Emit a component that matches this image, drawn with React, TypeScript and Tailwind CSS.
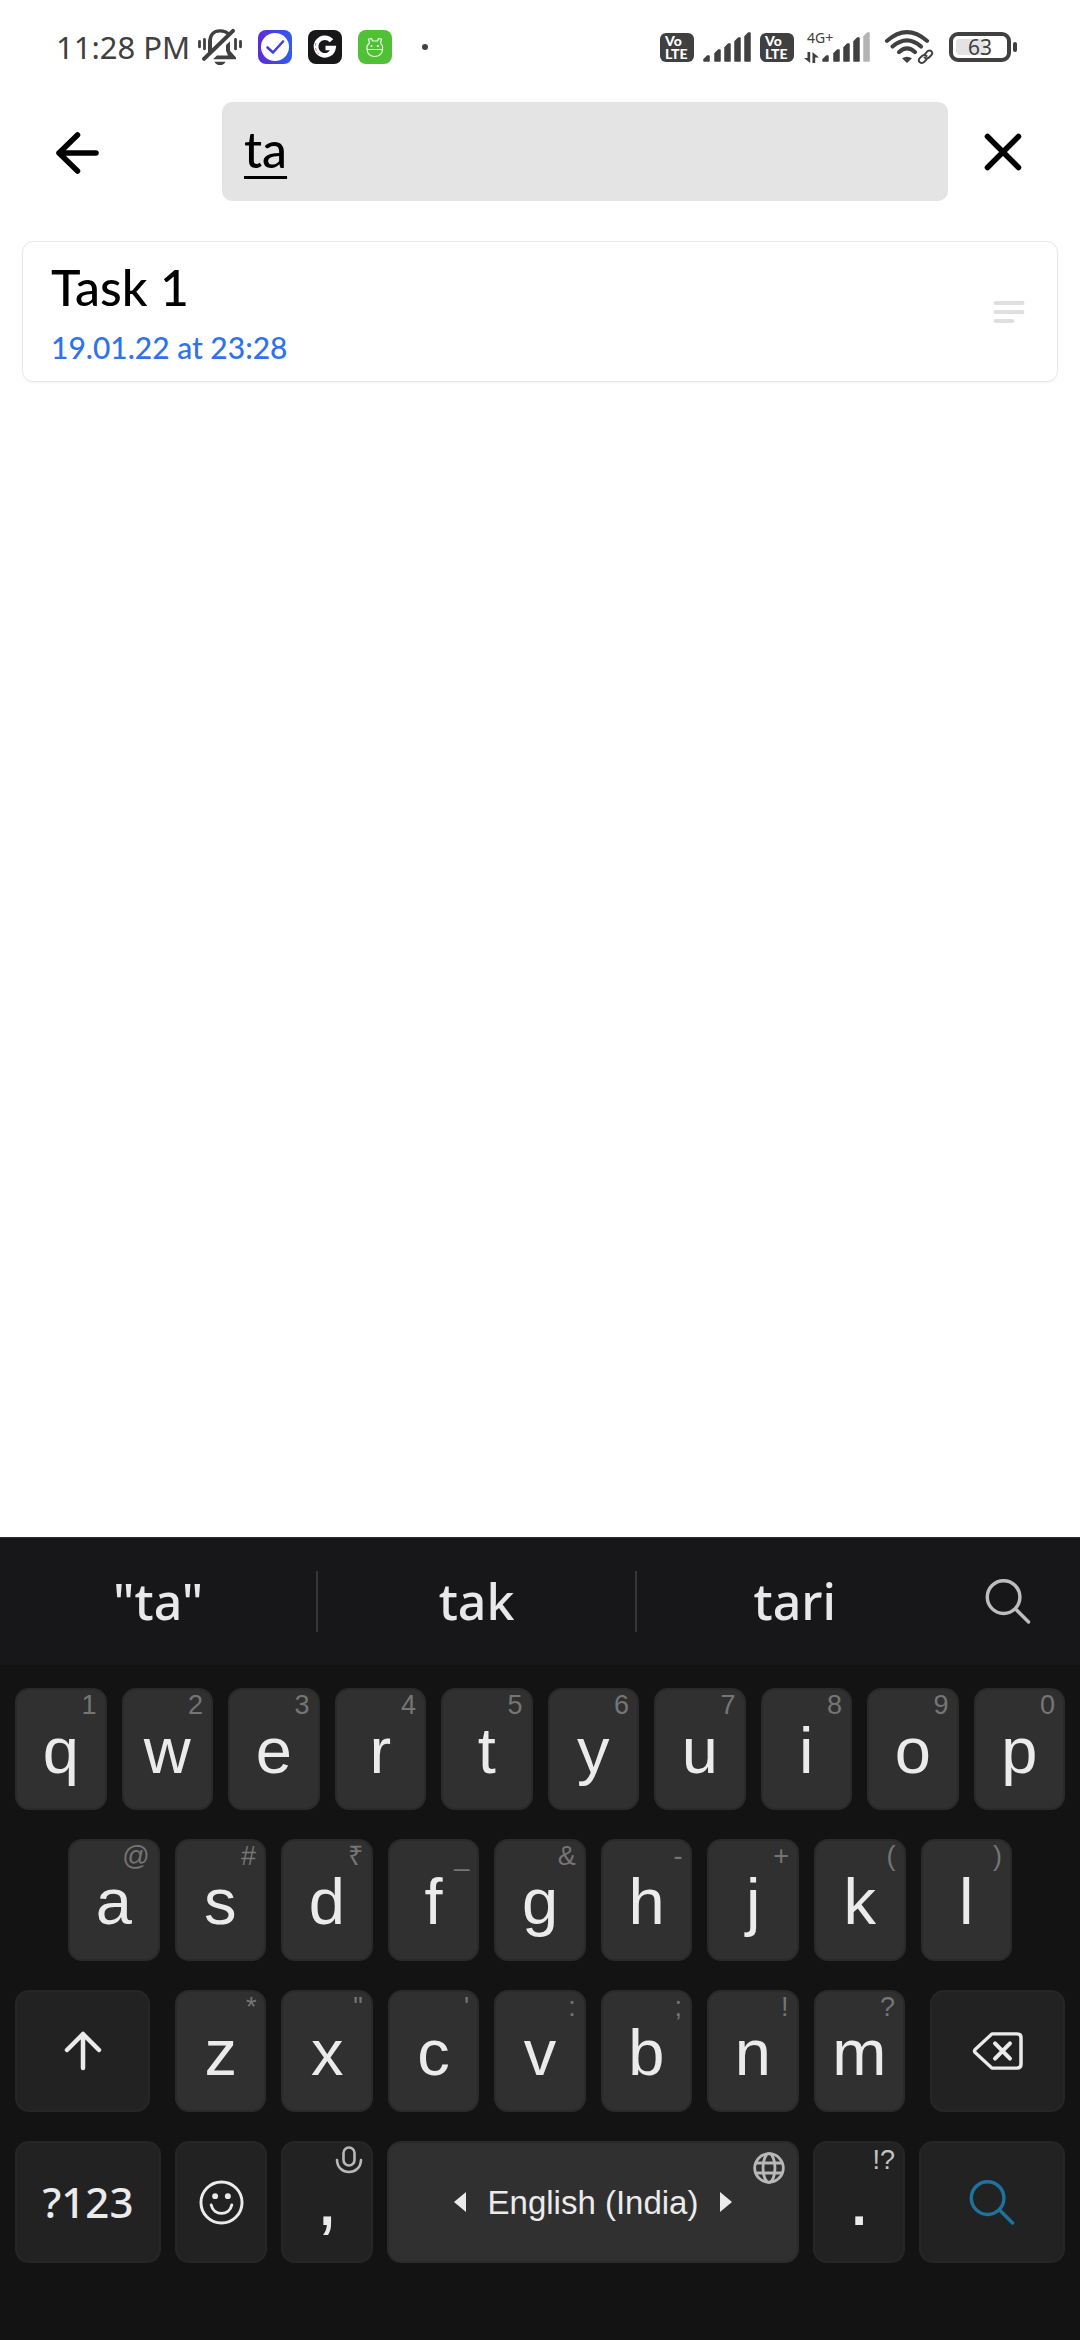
import { useState } from "react";
import type { ReactNode } from "react";

const ink = "#404040";

function MutedBell() {
  return (
    <svg width="44" height="38" viewBox="0 0 44 40" preserveAspectRatio="none" fill="none" stroke={ink} strokeLinecap="round" aria-label="Ringer muted">
      <path d="M12 24V14C12 7 16 3 22 3C26 3 29 4.500 30.500 6.500" strokeWidth="3.500" />
      <path d="M12 14V26" strokeWidth="4" />
      <path d="M6 32.500L35 3" strokeWidth="4" />
      <path d="M32 14V24L38 31V33H15L19 29H30L28 24V18Z" fill={ink} stroke="none" />
      <path d="M16.500 35.500H27.500C26.500 38 24.500 39 22 39C19.500 39 17.500 38 16.500 35.500Z" fill={ink} stroke="none" />
      <path d="M1.500 14V20M6.500 12V22M37.500 12V22M42.500 14V20" strokeWidth="2.800" />
    </svg>
  );
}

function CheckApp() {
  return (
    <svg width="34" height="34" viewBox="0 0 34 34" fill="none" aria-label="Tasks app">
      <defs>
        <linearGradient id="check-bg" x1="0" y1="0" x2="1" y2="0">
          <stop offset="0" stopColor="#5b2bd6" />
          <stop offset="1" stopColor="#2f5df0" />
        </linearGradient>
      </defs>
      <rect width="34" height="34" rx="8" fill="url(#check-bg)" />
      <circle cx="17" cy="17" r="14" fill="#fff" />
      <path d="M9.500 17.500L15 22.500L25 11.500" stroke="#4340d4" strokeWidth="2.600" strokeLinecap="round" strokeLinejoin="round" />
    </svg>
  );
}

function GApp() {
  return (
    <svg width="34" height="34" viewBox="0 0 34 34" fill="none" aria-label="G app">
      <rect width="34" height="34" rx="8" fill="#17171a" />
      <path d="M23.500 10.800A8.800 8.800 0 1 0 25.500 18H17.500" stroke="#fff" strokeWidth="4.600" />
      <path d="M8 13A10 10 0 0 0 11 24" stroke="#e0567c" strokeWidth="0.900" strokeDasharray="3 2" />
    </svg>
  );
}

function PetApp() {
  return (
    <svg width="34" height="34" viewBox="0 0 34 34" fill="none" stroke="#e9fbe0" strokeWidth="1.200" strokeLinejoin="round" aria-label="Pet app">
      <rect width="34" height="34" rx="8" fill="#50c036" stroke="none" />
      <path d="M9 19.500V16L11.500 13L10.500 9L13.500 8.500L14.500 11H19.500L20.500 8.500L23.500 9L22.500 13L24.500 16V19.500Z" />
      <path d="M9 19.500C9.500 24 12.500 26.500 16.700 26.500C21 26.500 24 24 24.500 19.500" />
      <path d="M12.500 16H14.500M18.800 16H21M13.500 15V17M19.900 15V17" />
    </svg>
  );
}

function VoLte() {
  return (
    <span className="flex h-[29px] w-[34px] flex-col justify-center rounded-md bg-[#404040] pl-[5px] font-['Lato'] text-[14px] leading-[13px] font-black text-white">
      <span>Vo</span>
      <span>LTE</span>
    </span>
  );
}

function Signal({ weak = false }: { weak?: boolean }) {
  const bars = [
    [0, 23],
    [11, 17],
    [21, 11],
    [31, 5],
    [41, 0],
  ];
  return (
    <svg width="48" height="30" viewBox="0 0 48 30" strokeLinejoin="round" strokeWidth="1.500" aria-label="Signal strength">
      {bars.map(([x, y], i) => (
        <path
          key={x}
          d={`M${x + 1} ${y + 4.5}L${x + 4.5} ${y + 1}H${x + 6}V29H${x + 1}Z`}
          fill={weak && i === 4 ? "#b4b4b4" : ink}
          stroke={weak && i === 4 ? "#b4b4b4" : ink}
        />
      ))}
    </svg>
  );
}

function Wifi() {
  return (
    <svg width="50" height="36" viewBox="0 0 50 38" preserveAspectRatio="none" fill="none" stroke={ink} strokeWidth="4.200" strokeLinecap="round" aria-label="Wi-Fi">
      <path d="M3 12.500Q23 -6 43 12.500" />
      <path d="M8.500 18.500Q23 5.500 37 18.500" />
      <path d="M15 24.500Q23 16.500 31 24.500" />
      <path d="M18 31Q23 27.500 28 31L23 36Z" fill={ink} stroke="none" />
      <circle cx="42" cy="30" r="9" fill="#fff" stroke="none" />
      <g strokeWidth="2">
        <path d="M41 26.500L43 24C46 20.500 50.500 25 47 28L44.500 30.500C43 31.500 41.500 31 40.500 30" />
        <path d="M42.500 32L40.500 34.500C37.500 38 32.500 34 36 30.500L38.500 28C40 27 41.500 27.500 42.500 28.500" />
      </g>
    </svg>
  );
}

function Battery() {
  return (
    <span className="flex items-center gap-0.5">
      <span className="relative flex h-[30px] w-[62px] items-center justify-center rounded-[9px] border-4 border-[#404040]">
        <span className="absolute top-[3px] bottom-[3px] left-[3px] w-[30px] rounded-sm bg-[#e3e3e3]" />
        <span className="relative font-['Noto_Sans'] text-[21px] leading-none text-[#404040]">63</span>
      </span>
      <span className="h-2.5 w-1 rounded-sm bg-[#404040]" />
    </span>
  );
}

function StatusBar() {
  return (
    <header className="flex h-[94px] items-center justify-between pr-[63px] pl-[56px]">
      <div className="flex items-center">
        <span className="mr-2 font-['Noto_Sans'] text-[31px] leading-none text-[#404040]">11:28 PM</span>
        <div className="flex items-center gap-4">
          <MutedBell />
          <CheckApp />
          <GApp />
          <PetApp />
        </div>
        <span className="ml-[30px] size-1.5 rounded-full bg-[#404040]" />
      </div>
      <div className="flex items-center">
        <VoLte />
        <span className="ml-[9px]">
          <Signal />
        </span>
        <span className="ml-[9px]">
          <VoLte />
        </span>
        <span className="ml-2.5 flex h-[31px] w-[18px] flex-col justify-between">
          <span className="ml-[3px] font-['Noto_Sans'] text-[14px] leading-[12px] whitespace-nowrap text-[#404040]">4G+</span>
          <svg width="15" height="11" viewBox="0 0 15 11" fill={ink} aria-label="Mobile data">
            <path d="M3.500 0H6.200V11L0 6H3.500ZM8.500 11V0L15 5.500H11.200V11Z" />
          </svg>
        </span>
        <Signal weak />
        <span className="ml-3.5">
          <Wifi />
        </span>
        <span className="ml-[15px]">
          <Battery />
        </span>
      </div>
    </header>
  );
}

function SearchIcon({ color }: { color: string }) {
  return (
    <svg width="46" height="45" viewBox="0 0 46 46" fill="none" stroke={color} strokeWidth="3.500" strokeLinecap="round">
      <circle cx="18.500" cy="18.500" r="16.700" />
      <path d="M31 31L44 44" />
    </svg>
  );
}

const dark = "bg-[#222222] border-[#262626]";
const light = "bg-[#303030] border-[#2a2a2a]";

function Key({ label, tone = light, width = "flex-1", children }: { label: string; tone?: string; width?: string; children: ReactNode }) {
  return (
    <button
      type="button"
      aria-label={label}
      className={`relative flex h-[122px] min-w-0 justify-center rounded-[14px] border-2 text-[#ebebeb] ${tone} ${width}`}
    >
      {children}
    </button>
  );
}

function LetterKey({ letter, hint }: { letter: string; hint: string }) {
  return (
    <Key label={letter}>
      <span className="absolute top-0.5 right-2 text-[27px] leading-none text-[#757575]">{hint}</span>
      <span className="pt-7 text-[65px] leading-none">{letter}</span>
    </Key>
  );
}

const rowOne = ["q1", "w2", "e3", "r4", "t5", "y6", "u7", "i8", "o9", "p0"];
const rowTwo = ["a@", "s#", "d₹", "f_", "g&", "h-", "j+", "k(", "l)"];
const rowThree = ["z*", 'x"', "c'", "v:", "b;", "n!", "m?"];

function Letters({ keys }: { keys: string[] }) {
  return (
    <>
      {keys.map((k) => (
        <LetterKey key={k} letter={k[0]} hint={k[1]} />
      ))}
    </>
  );
}

function Keyboard() {
  return (
    <section aria-label="Keyboard" className="bg-[#131313] font-['Liberation_Sans',sans-serif]">
      <div className="flex h-[128px] items-center border-t border-[#2c2c33] bg-[#171719] font-['Noto_Sans',sans-serif] text-[50px] font-medium text-[#e8e8e8]">
        {['"ta"', "tak", "tari"].map((word, i) => (
          <button
            type="button"
            key={word}
            className={`h-[61px] flex-1 leading-[61px] ${i < 2 ? "border-r-2 border-[#36363a]" : ""}`}
          >
            {word}
          </button>
        ))}
        <button type="button" aria-label="Search" className="flex w-[127px] justify-center pr-4">
          <SearchIcon color="#bdbdbd" />
        </button>
      </div>
      <div className="flex flex-col gap-[29px] px-[15px] pt-[23px] pb-[77px]">
        <div className="flex gap-[15px]">
          <Letters keys={rowOne} />
        </div>
        <div className="flex gap-[15px] px-[53px]">
          <Letters keys={rowTwo} />
        </div>
        <div className="flex gap-[25px]">
          <Key label="Shift" tone={dark} width="w-[135px]">
            <svg className="self-center" width="38" height="40" viewBox="0 0 38 40" fill="none" stroke="#ebebeb" strokeWidth="4.500" strokeLinecap="round" strokeLinejoin="round">
              <path d="M19 37V3M3 19L19 3L35 19" />
            </svg>
          </Key>
          <div className="flex flex-1 gap-[15px]">
            <Letters keys={rowThree} />
          </div>
          <Key label="Backspace" tone={dark} width="w-[135px]">
            <svg className="self-center" width="52" height="40" viewBox="0 0 52 42" preserveAspectRatio="none" fill="none" stroke="#ebebeb" strokeWidth="3.500" strokeLinecap="round" strokeLinejoin="round">
              <path d="M20 3H45Q49 3 49 7V35Q49 39 45 39H20L3 22.500Q2 21 3 19.500Z" />
              <path d="M23 13L38 29M38 13L23 29" strokeWidth="4" />
            </svg>
          </Key>
        </div>
        <div className="flex gap-3.5">
          <Key label="Numbers and symbols" tone={dark} width="w-[146px]">
            <span className="self-center font-['Noto_Sans',sans-serif] text-[42px] leading-none font-medium">?123</span>
          </Key>
          <Key label="Emoji" tone={dark} width="w-[92px]">
            <svg className="self-center" width="45" height="45" viewBox="0 0 46 46" fill="none" stroke="#ebebeb" strokeWidth="3" strokeLinecap="round">
              <circle cx="23" cy="23" r="21" />
              <path d="M12.500 25.500C15 37 31 37 33.500 25.500" />
              <circle cx="16.500" cy="16.500" r="3" fill="#ebebeb" stroke="none" />
              <circle cx="29.500" cy="16.500" r="3" fill="#ebebeb" stroke="none" />
            </svg>
          </Key>
          <Key label="Comma, voice input" tone={dark} width="w-[92px]">
            <svg className="absolute top-[3px] right-2" width="28" height="28" viewBox="0 0 28 28" fill="none" stroke="#b8b8b8" strokeWidth="2.600" strokeLinecap="round">
              <rect x="8.500" y="1.500" width="11" height="18" rx="5.500" />
              <path d="M2 14C2.500 30 25.500 30 26 14" />
            </svg>
            <span className="pt-[15px] text-[80px] leading-none">,</span>
          </Key>
          <Key label="Space, English (India)">
            <svg className="absolute top-[9px] right-3" width="32" height="32" viewBox="0 0 32 32" fill="none" stroke="#b8b8b8" strokeWidth="2.800">
              <circle cx="16" cy="16" r="14.300" />
              <ellipse cx="16" cy="16" rx="6" ry="14.300" />
              <path d="M2.500 11H29.500M2.500 21H29.500" />
            </svg>
            <span className="flex items-center gap-[22px] text-[33px] leading-none">
              <svg width="12" height="20" viewBox="0 0 12 20" fill="#ebebeb">
                <path d="M12 0V20L0 10Z" />
              </svg>
              English (India)
              <svg width="12" height="20" viewBox="0 0 12 20" fill="#ebebeb">
                <path d="M0 0V20L12 10Z" />
              </svg>
            </span>
          </Key>
          <Key label="Period, punctuation" tone={dark} width="w-[92px]">
            <span className="absolute top-1 right-2 text-[27px] leading-none text-[#c4c4c4]">!?</span>
            <span className="pt-[15px] text-[80px] leading-none">.</span>
          </Key>
          <Key label="Search" tone={dark} width="w-[146px]">
            <span className="self-center">
              <SearchIcon color="#1d72a0" />
            </span>
          </Key>
        </div>
      </div>
    </section>
  );
}

export default function App() {
  const [query, setQuery] = useState("ta");
  return (
    <div className="flex min-h-screen flex-col bg-white">
      <StatusBar />
      <main className="flex-1 font-['Lato',sans-serif]">
        <form className="flex items-center pt-2 pr-[57px] pl-[54px]" onSubmit={(e) => e.preventDefault()}>
          <button type="button" aria-label="Back" className="mr-[122px]">
            <svg width="46" height="46" viewBox="0 0 46 46" fill="none" stroke="#000" strokeWidth="5.500" strokeLinecap="round" strokeLinejoin="round">
              <path d="M42 24H5M23.500 6L5 24L23.500 42" />
            </svg>
          </button>
          <input
            type="text"
            aria-label="Search tasks"
            value={query}
            onChange={(e) => setQuery(e.target.value)}
            className="h-[99px] min-w-0 flex-1 rounded-[10px] bg-[#e4e4e4] px-[22px] pb-1.5 text-[50px] font-medium text-black underline decoration-4 underline-offset-8 outline-none"
          />
          <button type="button" aria-label="Clear" className="ml-[35px]">
            <svg width="40" height="40" viewBox="0 0 40 40" fill="none" stroke="#000" strokeWidth="5.500" strokeLinecap="round">
              <path d="M4.500 4.500L35.500 35.500M35.500 4.500L4.500 35.500" />
            </svg>
          </button>
        </form>
        <ul className="px-[22px] pt-10">
          <li className="flex h-[141px] items-center justify-between rounded-[11px] border border-[#e8e8e8] pr-8 pl-7 shadow-xs">
            <div>
              <h2 className="text-[50px] leading-[70px] font-medium text-black">Task 1</h2>
              <p className="text-[30px] leading-[50px] font-medium text-[#2f73ea]">19.01.22 at 23:28</p>
            </div>
            <svg width="32" height="22" viewBox="0 0 32 22" stroke="#e0e0e0" strokeWidth="4" strokeLinecap="round" aria-label="Reorder">
              <path d="M2.500 2H29.500M2.500 11H29.500M2.500 20H19.500" />
            </svg>
          </li>
        </ul>
      </main>
      <Keyboard />
    </div>
  );
}
